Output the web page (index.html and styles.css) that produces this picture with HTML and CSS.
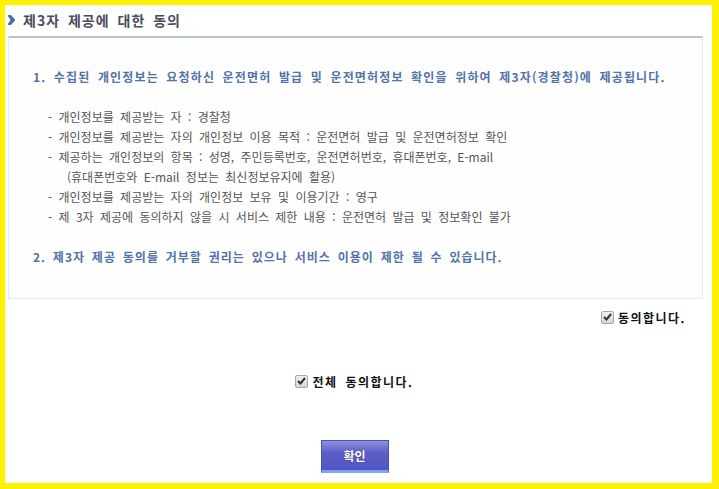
FILE: index.html
```html
<!DOCTYPE html>
<html lang="ko">

<head>
    <meta charset="utf-8">
    <title>제3자 제공에 대한 동의</title>
    <link rel="stylesheet" href="styles.css">
</head>

<body>
    <div class="frame">
        <div class="title-bar">
            <svg class="title-arrow" width="7" height="10" viewBox="0 0 7 10">
                <path d="M0 0.5 H3 L7 5 L3 9.5 H0 L3 5 Z" fill="#3f6db0" stroke="#3f6db0" stroke-width="0.8" stroke-linejoin="round" />
            </svg>
            <span class="title">제3자 제공에 대한 동의</span>
        </div>

        <div class="agree-box">
            <p class="lead">1. 수집된 개인정보는 요청하신 운전면허 발급 및 운전면허정보 확인을 위하여 제3자(경찰청)에 제공됩니다.</p>

            <ul class="info-list">
                <li>- 개인정보를 제공받는 자 : 경찰청</li>
                <li>- 개인정보를 제공받는 자의 개인정보 이용 목적 : 운전면허 발급 및 운전면허정보 확인</li>
                <li>- 제공하는 개인정보의 항목 : 성명, 주민등록번호, 운전면허번호, 휴대폰번호, E-mail</li>
                <li class="sub">(휴대폰번호와 E-mail 정보는 최신정보유지에 활용)</li>
                <li>- 개인정보를 제공받는 자의 개인정보 보유 및 이용기간 : 영구</li>
                <li>- 제 3자 제공에 동의하지 않을 시 서비스 제한 내용 : 운전면허 발급 및 정보확인 불가</li>
            </ul>

            <p class="lead last">2. 제3자 제공 동의를 거부할 권리는 있으나 서비스 이용이 제한 될 수 있습니다.</p>
        </div>

        <div class="check-row right">
            <label class="check">
                <span class="check-box">
                    <svg width="9" height="8" viewBox="0 0 9 8">
                        <path d="M1 4 L3.5 6.5 L8 1" fill="none" stroke="#333" stroke-width="2" />
                    </svg>
                </span>
                동의합니다.
            </label>
        </div>

        <div class="check-row center">
            <label class="check">
                <span class="check-box">
                    <svg width="9" height="8" viewBox="0 0 9 8">
                        <path d="M1 4 L3.5 6.5 L8 1" fill="none" stroke="#333" stroke-width="2" />
                    </svg>
                </span>
                전체 동의합니다.
            </label>
        </div>

        <div class="btn-row">
            <button class="btn-ok">확인</button>
        </div>
    </div>
</body>

</html>
```

FILE: styles.css
```css
body {
    margin: 0;
    padding: 0;
    background: #fff200;
    font-family: "Noto Sans CJK KR", "Noto Sans", sans-serif;
    font-size: 12px;
}

.frame {
    width: 719px;
    height: 489px;
    box-sizing: border-box;
    border-style: solid;
    border-color: #fff200;
    border-width: 5px 7px 6px 5px;
    background: #ffffff;
}

.title-bar {
    height: 31px;
    display: flex;
    align-items: flex-start;
    padding: 6px 0 0 2px;
    box-sizing: border-box;
}

.title-arrow {
    margin: 4px 8px 0 1px;
}

.title {
    font-size: 14px;
    line-height: 18px;
    font-weight: bold;
    color: #4c4c5c;
    letter-spacing: 1px;
    word-spacing: 3px;
}

.agree-box {
    margin: 0 9px 0 3px;
    height: 263px;
    box-sizing: border-box;
    border: 1px solid #e6e8ee;
    border-top: 2px solid #b4c5d9;
    background: #fefefe;
    padding: 29px 0 0 24px;
}

.lead {
    margin: 0;
    line-height: 20px;
    font-weight: bold;
    color: #5272aa;
    letter-spacing: 1.15px;
    word-spacing: 3px;
}

.lead.last {
    letter-spacing: 1px;
    word-spacing: 2.5px;
}

.info-list {
    list-style: none;
    margin: 20px 0;
    padding: 0 0 0 15px;
    color: #555555;
    line-height: 20px;
    word-spacing: 3px;
}

.sub {
    padding-left: 19px;
}

.check-row {
    display: flex;
    height: 20px;
    align-items: center;
}

.check-row.right {
    justify-content: flex-end;
    margin-top: 8px;
    padding-right: 26px;
}

.check-row.center {
    justify-content: center;
    margin-top: 44px;
    padding-right: 8px;
}

.check {
    display: flex;
    align-items: center;
    gap: 4px;
    font-weight: bold;
    color: #111111;
    letter-spacing: 1.5px;
    word-spacing: 3px;
}

.check-box {
    width: 11px;
    height: 11px;
    border: 1px solid #a8a8a8;
    border-radius: 2px;
    background: linear-gradient(#f0f0f0, #d4d4d4);
    display: flex;
    align-items: center;
    justify-content: center;
}

.btn-row {
    display: flex;
    justify-content: center;
    margin-top: 49px;
    padding-right: 8px;
}

.btn-ok {
    width: 68px;
    height: 33px;
    border: 1px solid #4a4fb8;
    border-bottom: 3px solid #7aa8f4;
    background: linear-gradient(#8d8fe0 0%, #5b5ec6 40%, #5256c0 100%);
    color: #ffffff;
    font-family: "Noto Sans CJK KR", sans-serif;
    font-size: 12px;
    font-weight: bold;
    padding: 0;
    text-shadow: 0 0 1px #333366;
}
```
